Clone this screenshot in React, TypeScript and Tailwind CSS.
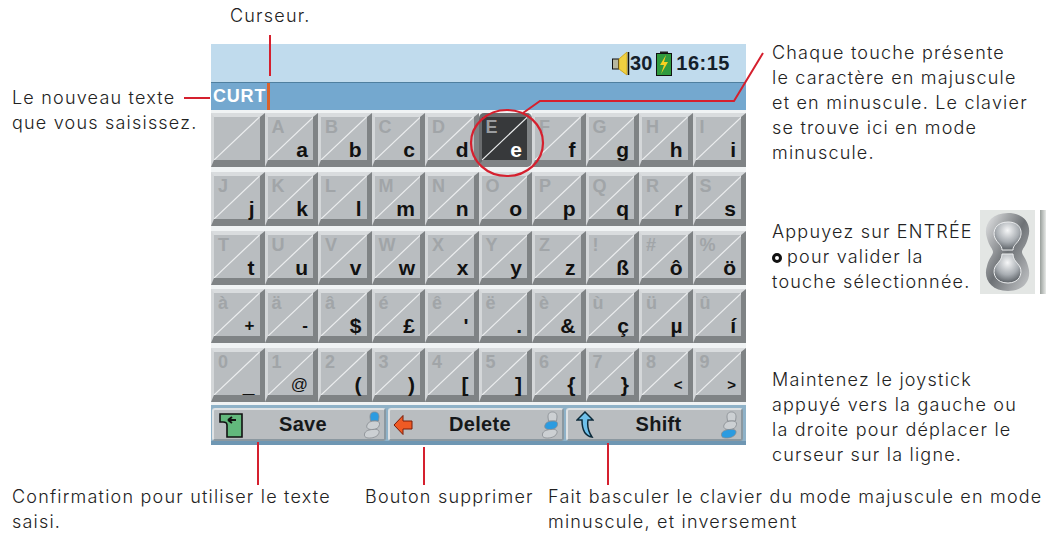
const FONT = "font-['Inter',sans-serif]"

const ROWS: [string, string][][] = [
  [['', ''], ['A', 'a'], ['B', 'b'], ['C', 'c'], ['D', 'd'], ['E', 'e'], ['F', 'f'], ['G', 'g'], ['H', 'h'], ['I', 'i']],
  [['J', 'j'], ['K', 'k'], ['L', 'l'], ['M', 'm'], ['N', 'n'], ['O', 'o'], ['P', 'p'], ['Q', 'q'], ['R', 'r'], ['S', 's']],
  [['T', 't'], ['U', 'u'], ['V', 'v'], ['W', 'w'], ['X', 'x'], ['Y', 'y'], ['Z', 'z'], ['!', 'ß'], ['#', 'ô'], ['%', 'ö']],
  [['à', '+'], ['ä', '-'], ['â', '$'], ['é', '£'], ['ê', "'"], ['ë', '.'], ['è', '&'], ['ù', 'ç'], ['ü', 'µ'], ['û', 'í']],
  [['0', '_'], ['1', '@'], ['2', '('], ['3', ')'], ['4', '['], ['5', ']'], ['6', '{'], ['7', '}'], ['8', '<'], ['9', '>']],
]

// these glyphs are smaller than the letters on the device
const SMALL_LOWER: Record<string, string> = {
  '@': 'text-[17px] font-normal',
  '<': 'text-[15px]',
  '>': 'text-[15px]',
  '+': 'text-[17px]',
  '-': 'text-[17px]',
}

function Key({ upper, lower, selected }: { upper: string; lower: string; selected?: boolean }) {
  return (
    <div
      className={`relative flex h-[54px] flex-col justify-between border-t-[4px] border-r-[5px] border-b-[7px] border-l-[3px] border-r-[#7f8385] border-b-[#7f8385] pt-[1px] pl-[4px] font-['Liberation_Sans',sans-serif] font-bold tracking-normal ${
        selected ? 'rounded-[5px] border-t-[#6a6c6e] border-l-[#6a6c6e] bg-[#37393b]' : 'border-t-[#d9dcde] border-l-[#d4d7d9] bg-[#b9bdc0]'
      }`}
    >
      <svg viewBox="0 0 45 43" preserveAspectRatio="none" className="absolute inset-0 h-full w-full">
        <line x1="0" y1="43" x2="45" y2="0" stroke="#eceeef" strokeWidth="1.2" />
      </svg>
      <span className={`relative self-start text-[18px] leading-[18px] ${selected ? 'text-[#9a9da0]' : 'text-[#a1a5a8]'}`}>{upper}</span>
      <span className={`relative self-end pr-[5px] leading-[20px] ${SMALL_LOWER[lower] ?? 'text-[21px]'} ${selected ? 'text-white' : 'text-[#111]'}`}>{lower}</span>
    </div>
  )
}

function Person({ part }: { part: 'top' | 'middle' | 'bottom' }) {
  const on = '#2b9be0'
  const off = '#ccd0d3'
  return (
    <svg viewBox="0 0 18 28" className="h-[28px] w-[18px] shrink-0">
      <path d="M7 6 C7 2 9 1 11.5 1 C14 1 16 2 16 6 L15.5 10 H7.5 Z" fill={part === 'top' ? on : off} stroke="#878c90" strokeWidth="0.8" />
      <path d="M4 14 C5 11 8 10 12 10 C15 10 17 11 16.5 13.5 C16 17 13 18.5 9 18.5 C5 18.5 3 17 4 14 Z" fill={part === 'middle' ? on : off} stroke="#878c90" strokeWidth="0.8" />
      <path d="M1.5 23 C2 20 6 18.5 10 18.5 C14 18 16.5 19 16 21.5 C15.5 25 11 27 6.5 27 C3 27 1 26 1.5 23 Z" fill={part === 'bottom' ? on : off} stroke="#878c90" strokeWidth="0.8" />
    </svg>
  )
}

function BarButton({ icon, label, part, className }: { icon: React.ReactNode; label: string; part: 'top' | 'middle' | 'bottom'; className: string }) {
  return (
    <div className={`flex h-[33px] items-center rounded-[3px] border-2 border-t-[#dfe2e4] border-r-[#8b98a0] border-b-[#8b98a0] border-l-[#dfe2e4] bg-[#b9bdc0] pr-[3px] pl-[5px] ${className}`}>
      <span className="flex w-[24px] shrink-0 justify-start">{icon}</span>
      <span className="flex-1 text-center font-['Liberation_Sans',sans-serif] text-[20px] font-bold tracking-[0.3px] text-[#16181a]">{label}</span>
      <Person part={part} />
    </div>
  )
}

function Device() {
  return (
    <div className="flex w-[535px] shrink-0 flex-col">
      <div className="flex h-[38px] items-center justify-end bg-[#c0dbed] pr-[16px] font-['Liberation_Sans',sans-serif] text-[20px] font-bold tracking-normal text-[#14202a]">
        <svg viewBox="0 0 18 25" className="h-[25px] w-[18px]">
          <rect x="0.5" y="8" width="6" height="10" fill="#b7b7a0" stroke="#111" />
          <path d="M7 8 L15 1 V24 L7 18 Z" fill="#f0d040" stroke="#d0a820" />
          <path d="M16.5 1 V24" stroke="#111" strokeWidth="1.5" />
        </svg>
        <span>30</span>
        <svg viewBox="0 0 16 25" className="mr-[4px] ml-[4px] h-[25px] w-[16px]">
          <rect x="4" y="0.5" width="8" height="3" fill="#222" />
          <rect x="0.5" y="2.5" width="15" height="22" fill="#2f9a3e" stroke="#111" />
          <path d="M10 4 L4 14 H8 L5 23 L12 11 H8 Z" fill="#f5d020" />
        </svg>
        <span className="tracking-[0.5px]">16:15</span>
      </div>
      <div className="h-[1px] bg-[#4f7f9f]" />
      <div className="flex h-[27px] items-center bg-[#74a8cf] pl-[2px] font-['Liberation_Sans',sans-serif] text-[18px] font-bold tracking-[0.8px] text-white">
        CURT
        <span className="ml-[1px] h-full w-[3px] bg-[#d8622c]" />
      </div>
      <div className="flex h-[295px] flex-col gap-[4.75px] bg-[#f0f3f4] pt-[3px]">
        {ROWS.map((row, r) => (
          <div key={r} className="grid grid-cols-10">
            {row.map(([upper, lower], c) => (
              <Key key={c} upper={upper} lower={lower} selected={upper === 'E'} />
            ))}
          </div>
        ))}
      </div>
    </div>
  )
}

function BottomBar() {
  return (
    <div className="flex h-[40px] w-[535px] items-start gap-[2px] border-b-[4px] border-[#6f97b3] bg-[#8fb2c8] pt-[3px] pl-[1px]">
      <BarButton
        className="w-[174px]"
        part="top"
        label="Save"
        icon={
          <svg viewBox="0 0 24 26" className="h-[26px] w-[24px]">
            <path d="M1 2 H23 V25 H8 V13 Q8 10 4 10 H1 Z" fill="#62b87c" stroke="#111" strokeWidth="1.6" />
            <path d="M9 8 H17 M9 8 L13 5 M9 8 L13 11" stroke="#111" strokeWidth="2" fill="none" />
          </svg>
        }
      />
      <BarButton
        className="w-[176px]"
        part="middle"
        label="Delete"
        icon={
          <svg viewBox="0 0 20 22" className="-ml-[2px] h-[22px] w-[20px]">
            <path d="M1 11 L10 1.5 V7 H19 V15 H10 V20.5 Z" fill="#ef5a24" stroke="#7a1c08" strokeWidth="1" />
          </svg>
        }
      />
      <BarButton
        className="w-[177px]"
        part="bottom"
        label="Shift"
        icon={
          <svg viewBox="0 0 18 28" className="ml-[3px] h-[28px] w-[18px]">
            <path d="M9 1 L17 9 H12 C11 15 12 20 16 26 C9 25 6 19 6 9 H1 Z" fill="#6fc0ea" stroke="#0c2a3a" strokeWidth="1.5" />
          </svg>
        }
      />
    </div>
  )
}

function Joystick() {
  return (
    <div className="flex h-[84px] shrink-0 items-stretch gap-[5px]">
      <svg viewBox="0 0 55 84" className="h-[84px] w-[55px]">
        <defs>
          <radialGradient id="ball" cx="50%" cy="30%" r="70%">
            <stop offset="0%" stopColor="#f6f7f8" />
            <stop offset="60%" stopColor="#a8adb2" />
            <stop offset="100%" stopColor="#5c6166" />
          </radialGradient>
          <linearGradient id="ring" x1="0" y1="0" x2="1" y2="1">
            <stop offset="0%" stopColor="#e8e9ea" />
            <stop offset="50%" stopColor="#6d7175" />
            <stop offset="100%" stopColor="#c8cacc" />
          </linearGradient>
        </defs>
        <rect width="55" height="84" fill="#e3e6e4" />
        <path d="M28 3 C46 3 52 16 48 28 C46 36 42 39 42 42 C42 45 46 48 48 56 C52 68 46 81 28 81 C10 81 3 68 7 56 C9 48 13 45 13 42 C13 39 9 36 7 28 C3 16 10 3 28 3 Z" fill="url(#ring)" />
        <path d="M28 12 C40 12 43 21 40 28 C37 34 33 35 33 40 H22 C22 35 18 34 15 28 C12 21 16 12 28 12 Z" fill="url(#ball)" stroke="#eef0f1" strokeWidth="1" />
        <path d="M22 44 H33 C33 50 37 52 40 57 C43 64 39 73 28 73 C16 73 12 64 15 57 C18 52 22 50 22 44 Z" fill="url(#ball)" stroke="#eef0f1" strokeWidth="1" />
      </svg>
      <div className="w-[6px] bg-gradient-to-r from-[#9aa09c] to-[#e8eae8]" />
    </div>
  )
}

function Callouts() {
  return (
    <svg viewBox="0 0 1048 534" className="pointer-events-none absolute inset-0 h-[534px] w-[1048px]" fill="none" stroke="#d5202e" strokeWidth="2">
      <line x1="270" y1="35" x2="270" y2="76" />
      <line x1="184" y1="98" x2="210" y2="98" />
      <ellipse cx="507" cy="143" rx="36" ry="33" strokeWidth="2.2" />
      <polyline points="523,113 540,101 734,101 763,53" />
      <line x1="258" y1="442" x2="258" y2="485" />
      <line x1="424" y1="447" x2="424" y2="485" />
      <line x1="608" y1="443" x2="608" y2="485" />
    </svg>
  )
}

export default function App() {
  return (
    <div className={`relative flex h-[534px] w-[1048px] flex-col overflow-hidden bg-white text-[18px] leading-[25px] font-light tracking-[1.2px] whitespace-nowrap text-[#222] ${FONT}`}>
      <div className="h-[44px] pt-[3px] pl-[230px]">Curseur.</div>
      <div className="flex h-[401px]">
        <div className="w-[211px] shrink-0 pt-[41px] pl-[12px]">
          Le nouveau texte
          <br />
          que vous saisissez.
        </div>
        <div className="flex w-[535px] shrink-0 flex-col">
          <Device />
          <BottomBar />
        </div>
        <div className="flex flex-1 flex-col pl-[26px]">
          <div className="-mt-[4px]">
            Chaque touche présente
            <br />
            le caractère en majuscule
            <br />
            et en minuscule. Le clavier
            <br />
            se trouve ici en mode
            <br />
            minuscule.
          </div>
          <div className="mt-[45px] flex items-end">
            <div className="w-[208px] shrink-0">
              Appuyez sur ENTRÉE
              <br />
              <span className="mr-[5px] inline-block h-[10px] w-[10px] rounded-full border-[3px] border-[#111]" />
              pour valider la
              <br />
              touche sélectionnée.
            </div>
            <Joystick />
          </div>
          <div className="mt-[73px]">
            Maintenez le joystick
            <br />
            appuyé vers la gauche ou
            <br />
            la droite pour déplacer le
            <br />
            curseur sur la ligne.
          </div>
        </div>
      </div>
      <div className="flex flex-1 pt-[39px]">
        <div className="w-[365px] shrink-0 pl-[12px]">
          Confirmation pour utiliser le texte
          <br />
          saisi.
        </div>
        <div className="w-[183px] shrink-0">Bouton supprimer</div>
        <div>
          Fait basculer le clavier du mode majuscule en mode
          <br />
          minuscule, et inversement
        </div>
      </div>
      <Callouts />
    </div>
  )
}
